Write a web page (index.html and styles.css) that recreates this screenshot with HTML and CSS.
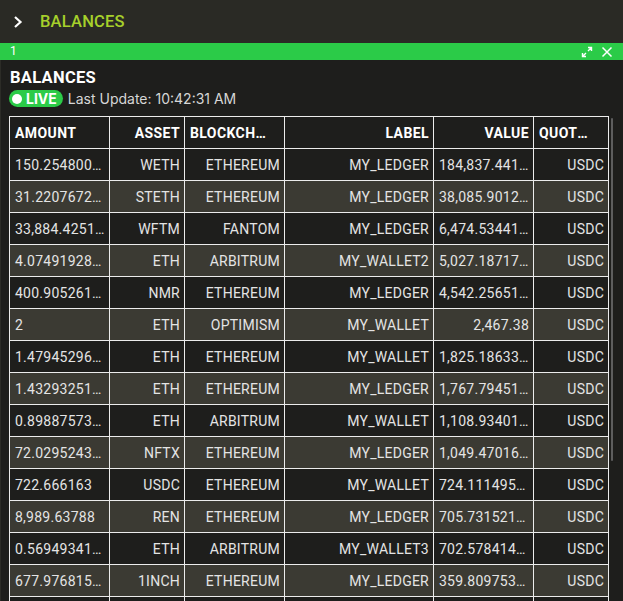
FILE: index.html
```html
<!DOCTYPE html>
<html>
<head>
<meta charset="utf-8">
<link rel="stylesheet" href="styles.css">
</head>
<body>
<div class="topbar">
  <svg class="chev" width="10" height="14" viewBox="0 0 10 14"><path d="M2 2 L7.5 7 L2 12" fill="none" stroke="#fff" stroke-width="2.2"/></svg>
  <span class="top-title">BALANCES</span>
</div>
<div class="tabbar">
  <span class="tab-num">1</span>
  <div class="tab-icons">
    <svg width="12" height="12" viewBox="0 0 12 12"><path d="M7 1.5 H10.5 V5 M10.5 1.5 L7 5" fill="none" stroke="#fff" stroke-width="1.4"/><path d="M5 10.5 H1.5 V7 M1.5 10.5 L5 7" fill="none" stroke="#fff" stroke-width="1.4"/></svg>
    <svg width="12" height="12" viewBox="0 0 12 12"><path d="M1.5 1.5 L10.5 10.5 M10.5 1.5 L1.5 10.5" fill="none" stroke="#fff" stroke-width="1.5"/></svg>
  </div>
</div>
<div class="panel">
  <div class="panel-title">BALANCES</div>
  <div class="status">
    <span class="live"><span class="dot"></span>LIVE</span>
    <span class="updated">Last Update: 10:42:31 AM</span>
  </div>
  <div class="grid-wrap">
    <table class="grid">
      <colgroup>
        <col class="c1"><col class="c2"><col class="c3"><col class="c4"><col class="c5"><col class="c6">
      </colgroup>
      <thead>
        <tr><th class="l">AMOUNT</th><th class="r">ASSET</th><th class="l">BLOCKCHAIN</th><th class="r">LABEL</th><th class="r">VALUE</th><th class="l">QUOTE ASSET</th></tr>
      </thead>
      <tbody>
        <tr><td class="l">150.25480012345</td><td>WETH</td><td>ETHEREUM</td><td>MY_LEDGER</td><td>184,837.4412345</td><td>USDC</td></tr>
        <tr><td class="l">31.220767212345</td><td>STETH</td><td>ETHEREUM</td><td>MY_LEDGER</td><td>38,085.9012345</td><td>USDC</td></tr>
        <tr><td class="l">33,884.42512345</td><td>WFTM</td><td>FANTOM</td><td>MY_LEDGER</td><td>6,474.53441234</td><td>USDC</td></tr>
        <tr><td class="l">4.0749192812345</td><td>ETH</td><td>ARBITRUM</td><td>MY_WALLET2</td><td>5,027.1871712345</td><td>USDC</td></tr>
        <tr><td class="l">400.9052612345</td><td>NMR</td><td>ETHEREUM</td><td>MY_LEDGER</td><td>4,542.25651234</td><td>USDC</td></tr>
        <tr><td class="l">2</td><td>ETH</td><td>OPTIMISM</td><td>MY_WALLET</td><td>2,467.38</td><td>USDC</td></tr>
        <tr><td class="l">1.4794529612345</td><td>ETH</td><td>ETHEREUM</td><td>MY_WALLET</td><td>1,825.1863312345</td><td>USDC</td></tr>
        <tr><td class="l">1.4329325112345</td><td>ETH</td><td>ETHEREUM</td><td>MY_LEDGER</td><td>1,767.7945112345</td><td>USDC</td></tr>
        <tr><td class="l">0.8988757312345</td><td>ETH</td><td>ARBITRUM</td><td>MY_WALLET</td><td>1,108.93401234</td><td>USDC</td></tr>
        <tr><td class="l">72.029524312345</td><td>NFTX</td><td>ETHEREUM</td><td>MY_LEDGER</td><td>1,049.4701612345</td><td>USDC</td></tr>
        <tr><td class="l">722.666163</td><td>USDC</td><td>ETHEREUM</td><td>MY_WALLET</td><td>724.11149512345</td><td>USDC</td></tr>
        <tr><td class="l">8,989.63788</td><td>REN</td><td>ETHEREUM</td><td>MY_LEDGER</td><td>705.73152112345</td><td>USDC</td></tr>
        <tr><td class="l">0.5694934123456</td><td>ETH</td><td>ARBITRUM</td><td>MY_WALLET3</td><td>702.57841412345</td><td>USDC</td></tr>
        <tr><td class="l">677.97681512345</td><td>1INCH</td><td>ETHEREUM</td><td>MY_LEDGER</td><td>359.80975312345</td><td>USDC</td></tr>
        <tr><td class="l">0.1948223412345</td><td>ETH</td><td>ETHEREUM</td><td>MY_WALLET</td><td>351.12345612345</td><td>USDC</td></tr>
      </tbody>
    </table>
    <div class="thumb"></div>
  </div>
</div>
</body>
</html>
```

FILE: styles.css
```css
html, body {
  margin: 0;
  padding: 0;
  height: 100%;
  overflow: hidden;
}
body {
  background: #1e1e1c;
  font-family: Roboto, "Liberation Sans", sans-serif;
  color: #e4e4e4;
}
.topbar {
  height: 43px;
  background: #2a2a25;
  display: flex;
  align-items: center;
  padding-left: 13px;
  box-sizing: border-box;
}
.chev {
  display: block;
}
.top-title {
  margin-left: 17px;
  color: #a6d02b;
  font-size: 16.5px;
  font-weight: 500;
  letter-spacing: 0.2px;
}
.tabbar {
  height: 17px;
  background: #2bcb48;
  display: flex;
  align-items: center;
  justify-content: space-between;
  padding: 0 10px 0 10px;
}
.tab-num {
  color: #fff;
  font-size: 12px;
  line-height: 17px;
}
.tab-icons {
  display: flex;
  gap: 8px;
  align-items: center;
}
.tab-icons svg {
  display: block;
}
.panel {
  border-left: 1px solid #2c2c27;
  height: calc(100% - 60px);
  box-sizing: border-box;
}
.panel-title {
  padding: 8px 0 0 9px;
  font-size: 16.5px;
  font-weight: 700;
  color: #fff;
  line-height: 20px;
  letter-spacing: 0.3px;
}
.status {
  display: flex;
  align-items: center;
  padding: 2px 0 0 8px;
  height: 17px;
  font-family: Inter, Roboto, sans-serif;
}
.live {
  display: flex;
  align-items: center;
  background: #2bcb48;
  color: #fff;
  border-radius: 9px;
  height: 17px;
  padding: 0 6px 0 3px;
  font-size: 14px;
  font-weight: 700;
  box-sizing: border-box;
}
.dot {
  width: 10px;
  height: 10px;
  border-radius: 50%;
  background: #fff;
  margin-right: 4px;
}
.updated {
  margin-left: 5px;
  font-size: 14px;
  color: #d6d6d6;
}
.grid-wrap {
  position: relative;
  margin: 9px 0 0 8px;
  width: 610px;
  height: 600px;
  overflow: hidden;
}
.grid {
  table-layout: fixed;
  border-collapse: collapse;
  width: 599px;
  font-size: 14px;
}
.c1 { width: 100px; }
.c2 { width: 75px; }
.c3 { width: 100px; }
.c4 { width: 149px; }
.c5 { width: 100px; }
.c6 { width: 75px; }
.grid th, .grid td {
  border: 1px solid #ececec;
  height: 32px;
  padding: 0 4px 0 5px;
  white-space: nowrap;
  overflow: hidden;
  text-overflow: ellipsis;
  text-align: right;
  box-sizing: border-box;
}
.grid td {
  letter-spacing: 0.25px;
}
.grid th {
  color: #fff;
  font-weight: 700;
  background: #1e1e1c;
  letter-spacing: 0.4px;
}
.grid th.l {
  padding-right: 14px;
}
.grid th.l, .grid td.l {
  text-align: left;
}
.grid tbody tr:nth-child(odd) td {
  background: #1e1e1c;
}
.grid tbody tr:nth-child(even) td {
  background: #3b3a33;
}
.thumb {
  position: absolute;
  left: 602px;
  top: 2px;
  width: 2px;
  height: 343px;
  background: #5e5e5e;
  border-radius: 1px;
}
```
